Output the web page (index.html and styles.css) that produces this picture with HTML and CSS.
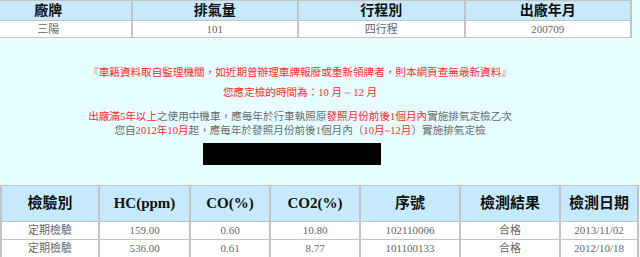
FILE: index.html
```html
<!DOCTYPE html>
<html lang="zh-Hant">
<head>
<meta charset="utf-8">
<title>機車排氣定檢查詢</title>
<link rel="stylesheet" href="styles.css">
</head>
<body>
<table class="car">
  <colgroup><col class="c1"><col class="c1"><col class="c1"><col class="c1"></colgroup>
  <tr class="head"><th>廠牌</th><th>排氣量</th><th>行程別</th><th>出廠年月</th></tr>
  <tr class="row"><td>三陽</td><td>101</td><td>四行程</td><td>200709</td></tr>
</table>

<div class="notice">
  <p class="red l1">『車籍資料取自監理機關，如近期曾辦理車牌報廢或重新領牌者，則本網頁查無最新資料』</p>
  <p class="red l2">您應定檢的時間為：10 月 ~ 12 月</p>
  <p class="gray l3"><span class="red">出廠滿5年以上</span>之使用中機車，應每年於行車執照原<span class="red">發照月份前後1個月內</span>實施排氣定檢乙次</p>
  <p class="gray l4">您自<span class="red">2012年10月</span>起，應每年於發照月份前後1個月內（<span class="red">10月~12月</span>）實施排氣定檢</p>
  <div class="mask"></div>
</div>

<table class="check">
  <colgroup>
    <col class="k1"><col class="k2"><col class="k3"><col class="k4"><col class="k5"><col class="k6"><col class="k7">
  </colgroup>
  <tr class="head"><th>檢驗別</th><th>HC(ppm)</th><th>CO(%)</th><th>CO2(%)</th><th>序號</th><th>檢測結果</th><th>檢測日期</th></tr>
  <tr class="row"><td>定期檢驗</td><td>159.00</td><td>0.60</td><td>10.80</td><td>102110006</td><td>合格</td><td>2013/11/02</td></tr>
  <tr class="row"><td>定期檢驗</td><td>536.00</td><td>0.61</td><td>8.77</td><td>101100133</td><td>合格</td><td>2012/10/18</td></tr>
</table>
</body>
</html>
```

FILE: styles.css
```css
html, body {
  margin: 0;
  padding: 0;
  background: #e6feff;
  font-family: "Liberation Serif", "Noto Sans CJK TC", serif;
  overflow: hidden;
}

table {
  border-collapse: collapse;
  table-layout: fixed;
}

th, td {
  padding: 0;
  text-align: center;
  border: 1px solid #c4c4c4;
  border-left-width: 2px;
  border-right-width: 2px;
  white-space: nowrap;
  overflow: hidden;
}

.head th {
  background: #c6eafb;
  color: #111;
  font-weight: bold;
}

.row td {
  background: #ffffff;
  color: #666;
  font-size: 11px;
}

/* top table */
.car {
  width: 668px;
  margin-left: -36px;
}
.car .head th {
  height: 19px;
  font-size: 14px;
  line-height: 19px;
}
.car .row td {
  height: 16px;
  line-height: 16px;
}

/* notice block */
.notice {
  width: 600px;
  padding-top: 28px;
  height: 147px;
  box-sizing: border-box;
  font-size: 10.6px;
}
.notice p {
  margin: 0;
  text-align: center;
  line-height: 14px;
}
.red { color: #ff2a2a; }
.gray { color: #6a6a6a; }
.l1 { margin-bottom: 6px !important; }
.l2 { margin-bottom: 10px !important; }
.mask {
  width: 178px;
  height: 22px;
  background: #000;
  margin: 5px 0 0 203px;
}

/* bottom table */
.check {
  width: 637px;
}
.check .head th {
  height: 35px;
  font-size: 15px;
  line-height: 35px;
}
.check .row td {
  height: 17px;
  line-height: 17px;
}
.k1 { width: 98px; }
.k2 { width: 91px; }
.k3 { width: 80px; }
.k4 { width: 90px; }
.k5 { width: 100px; }
.k6 { width: 100px; }
.k7 { width: 78px; }
```
